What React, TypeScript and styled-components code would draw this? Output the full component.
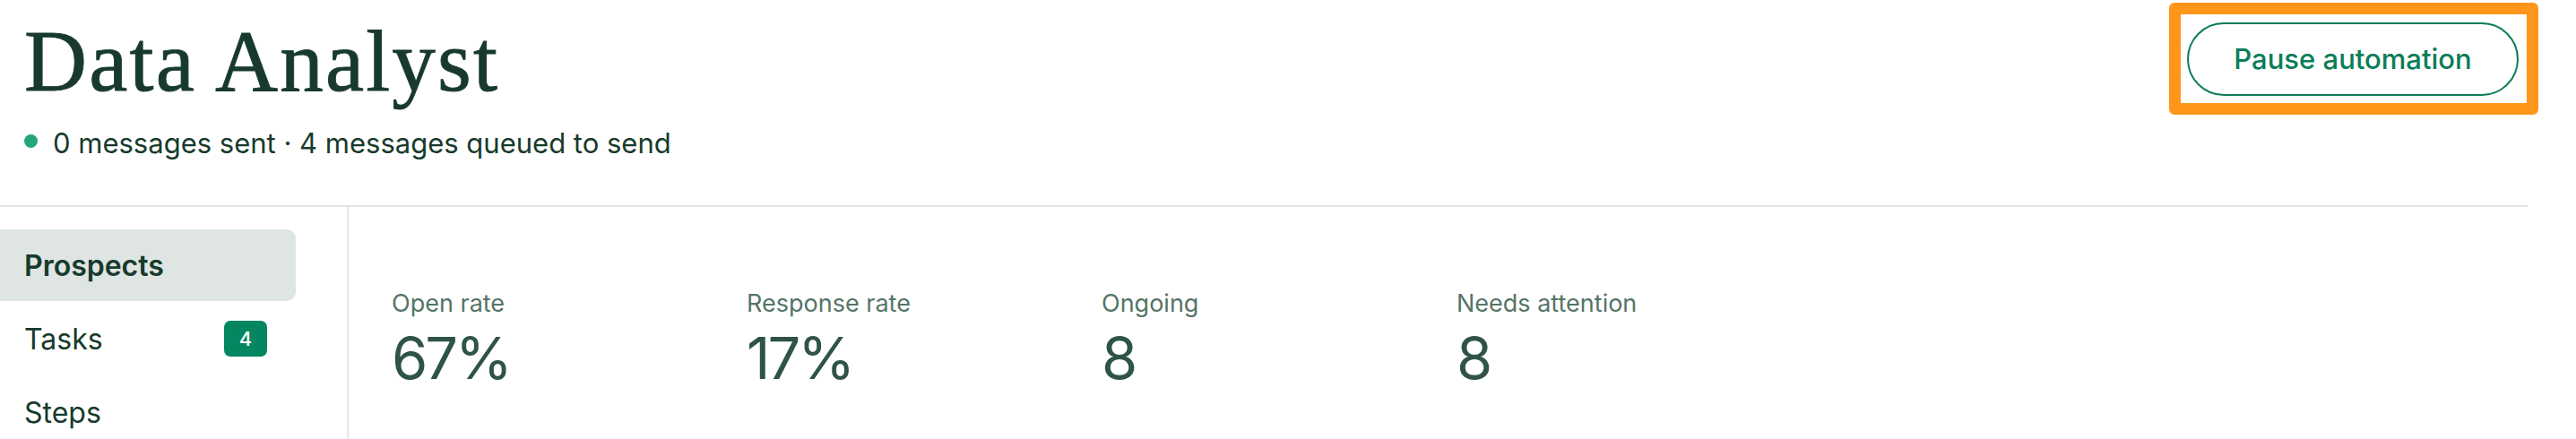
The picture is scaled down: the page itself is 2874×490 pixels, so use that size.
import React from "react";
import styled, { createGlobalStyle } from "styled-components";

const GlobalStyle = createGlobalStyle`
  html, body {
    margin: 0;
    padding: 0;
    background: #ffffff;
  }
  body {
    font-family: Inter, "Liberation Sans", Arial, sans-serif;
    color: #173a2c;
  }
  * { box-sizing: border-box; }
`;

const Page = styled.div`
  width: 2874px;
  height: 490px;
  overflow: hidden;
  background: #ffffff;
`;

const Header = styled.header`
  display: flex;
  justify-content: space-between;
  align-items: flex-start;
  padding: 21px 64px 0 27px;
  height: 229px;
`;

const TitleBlock = styled.div`
  display: flex;
  flex-direction: column;
`;

const Title = styled.h1`
  margin: 0;
  font-family: "Liberation Serif", "Times New Roman", serif;
  font-weight: 400;
  font-size: 97px;
  line-height: 96px;
  color: #173a2c;
  letter-spacing: 2.2px;
  -webkit-text-stroke: 0.9px #173a2c;
`;

const Status = styled.div`
  display: flex;
  align-items: center;
  gap: 17px;
  margin-top: 25px;
  font-size: 31px;
  line-height: 36px;
  color: #173a2c;
`;

const StatusDot = styled.span`
  width: 15px;
  height: 15px;
  border-radius: 50%;
  background: #22a67b;
  flex: none;
  margin-top: -5px;
`;

const ButtonWrap = styled.div`
  position: relative;
  margin-top: 4px;
`;

const HighlightFrame = styled.span`
  position: absolute;
  top: -22px;
  left: -20px;
  right: -22px;
  bottom: -21px;
  border: 13px solid #ff961a;
  border-radius: 6px;
  pointer-events: none;
`;

const OutlineButton = styled.button`
  display: flex;
  align-items: center;
  justify-content: center;
  width: 370px;
  height: 82px;
  border: 2px solid #0b7d57;
  border-radius: 41px;
  background: #ffffff;
  color: #0b7d57;
  font-family: Inter, "Liberation Sans", Arial, sans-serif;
  font-size: 31px;
  font-weight: 450;
  padding: 0 0 2px;
  cursor: pointer;
`;

const Body = styled.div`
  display: flex;
  margin-right: 54px;
  border-top: 2px solid #e0e4e2;
  height: 261px;
`;

const Sidebar = styled.nav`
  width: 389px;
  flex: none;
  border-right: 2px solid #e6e9e8;
  padding-top: 25px;
  display: flex;
  flex-direction: column;
  gap: 2px;
`;

const NavItem = styled.div<{ $active?: boolean }>`
  display: flex;
  align-items: center;
  justify-content: space-between;
  width: 330px;
  height: 80px;
  flex: none;
  padding: 0 32px 0 27px;
  border-radius: 0 11px 11px 0;
  background: ${(p) => (p.$active ? "#dfe5e2" : "transparent")};
  font-size: 32px;
  font-weight: ${(p) => (p.$active ? 600 : 400)};
  color: #173a2c;
`;

const Badge = styled.span`
  display: flex;
  align-items: center;
  justify-content: center;
  width: 48px;
  height: 40px;
  border-radius: 7px;
  background: #068660;
  color: #ffffff;
  font-size: 22px;
  font-weight: 500;
`;

const Content = styled.section`
  flex: 1;
  padding: 91px 0 0 48px;
`;

const StatsRow = styled.div`
  display: grid;
  grid-template-columns: repeat(4, 396px);
`;

const Stat = styled.div`
  display: flex;
  flex-direction: column;
  gap: 8px;
`;

const StatLabel = styled.div`
  font-size: 27px;
  line-height: 34px;
  color: #557466;
`;

const StatValue = styled.div`
  font-size: 65px;
  line-height: 72px;
  color: #2f5446;
  letter-spacing: -3px;
`;

const stats = [
  { label: "Open rate", value: "67%" },
  { label: "Response rate", value: "17%" },
  { label: "Ongoing", value: "8" },
  { label: "Needs attention", value: "8" },
];

export default function App() {
  return (
    <Page>
      <GlobalStyle />
      <Header>
        <TitleBlock>
          <Title>Data Analyst</Title>
          <Status>
            <StatusDot />
            <span>0 messages sent · 4 messages queued to send</span>
          </Status>
        </TitleBlock>
        <ButtonWrap>
          <OutlineButton>Pause automation</OutlineButton>
          <HighlightFrame />
        </ButtonWrap>
      </Header>
      <Body>
        <Sidebar>
          <NavItem $active>Prospects</NavItem>
          <NavItem>
            Tasks
            <Badge>4</Badge>
          </NavItem>
          <NavItem>Steps</NavItem>
        </Sidebar>
        <Content>
          <StatsRow>
            {stats.map((s) => (
              <Stat key={s.label}>
                <StatLabel>{s.label}</StatLabel>
                <StatValue>{s.value}</StatValue>
              </Stat>
            ))}
          </StatsRow>
        </Content>
      </Body>
    </Page>
  );
}
